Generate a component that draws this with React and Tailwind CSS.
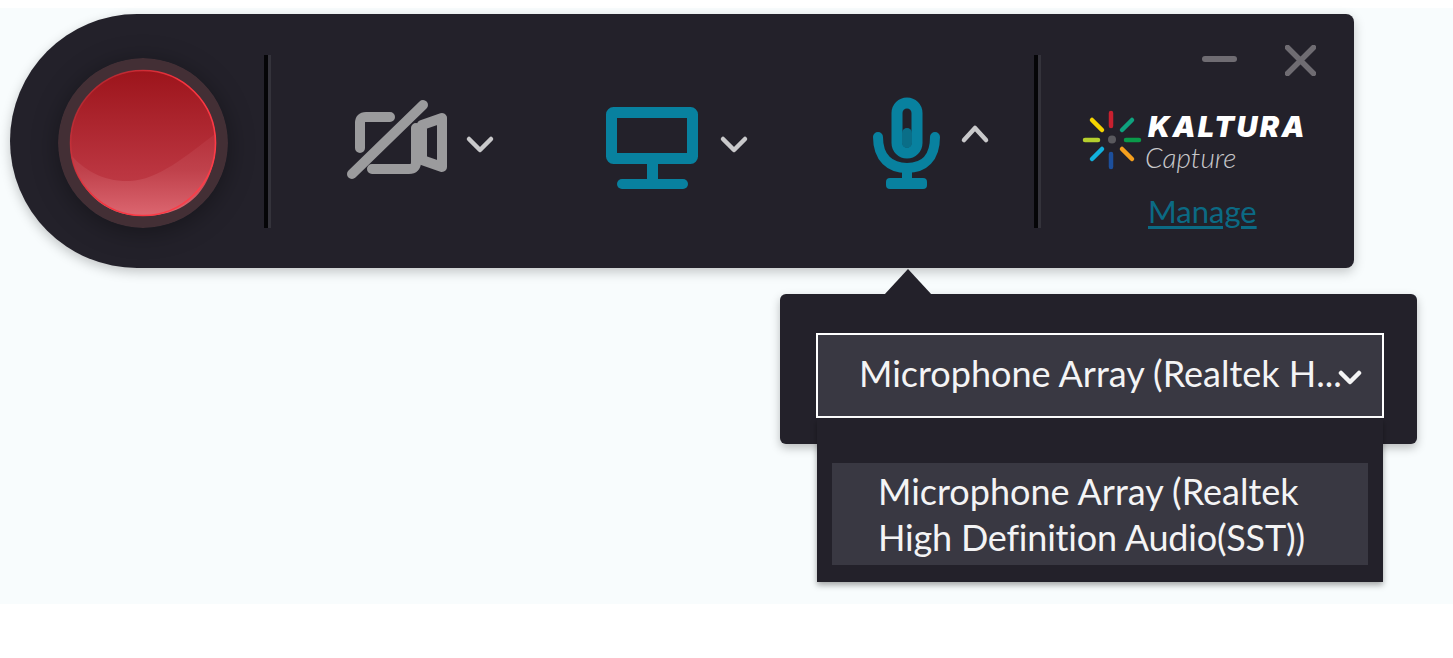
import { useId } from 'react';

const BLUE = '#08819f';

function RecordButton() {
  const id = useId();
  return (
    <svg width="170" height="170" viewBox="0 0 170 170" className="mt-1 shrink-0 rounded-full shadow-[0_4px_26px_rgba(0,0,0,0.35)]">
      <defs>
        <linearGradient id={`${id}top`} x1="0" y1="0" x2="0" y2="1">
          <stop offset="0" stopColor="#9c141b" />
          <stop offset="0.7" stopColor="#bb3540" />
          <stop offset="1" stopColor="#c4434d" />
        </linearGradient>
        <linearGradient id={`${id}low`} x1="0" y1="0" x2="0" y2="1">
          <stop offset="0" stopColor="#b5313b" />
          <stop offset="0.45" stopColor="#c0424c" />
          <stop offset="1" stopColor="#dc6670" />
        </linearGradient>
        <linearGradient id={`${id}edge`} x1="0" y1="0.2" x2="1" y2="0.8">
          <stop offset="0" stopColor="#c23039" stopOpacity="0.5" />
          <stop offset="0.5" stopColor="#f5343f" />
          <stop offset="1" stopColor="#ff3d49" />
        </linearGradient>
      </defs>
      <circle cx="85" cy="85" r="85" fill="#432f35" />
      <circle cx="85" cy="85" r="73" fill={`url(#${id}top)`} />
      <path d="M14 98C26 112 46 124 72 123C100 122 128 98 157 76C160 110 146 158 85 158C44 158 20 130 14 98Z" fill={`url(#${id}low)`} />
      <circle cx="85" cy="85" r="72.5" fill="none" stroke={`url(#${id}edge)`} strokeWidth="1.6" />
    </svg>
  );
}

function Divider() {
  return (
    <div className="flex h-[173px] w-[7px] shrink-0">
      <div className="w-1 bg-[#050507]" />
      <div className="w-[3px] bg-[#34333b]" />
    </div>
  );
}

function Chevron({ x, up, className }) {
  const d = up ? `M${x + 4} 140L${x + 15} 128L${x + 26} 140` : `M${x + 4} 139L${x + 15} 150L${x + 26} 139`;
  return (
    <svg width="30" height="100" viewBox={`${x} 91 30 100`} className={className}>
      <path d={d} fill="none" stroke="#c9c9cb" strokeWidth="4.5" strokeLinecap="round" strokeLinejoin="round" />
    </svg>
  );
}

function CameraOff({ className }) {
  return (
    <svg width="104" height="100" viewBox="346 91 104 100" className={className}>
      <g fill="none" stroke="#9b9b9d" strokeWidth="10" strokeLinecap="round" strokeLinejoin="round">
        <path d="M390 117H366Q360 117 360 123V148" />
        <path d="M372 169H409Q416 169 416 162V128" />
        <path d="M422 125L442 118V167L422 160Z" />
        <path d="M352 174L423 105" />
      </g>
    </svg>
  );
}

function Monitor({ className }) {
  return (
    <svg width="98" height="100" viewBox="603 91 98 100" className={className}>
      <rect x="611.5" y="112.5" width="81" height="46" rx="2" fill="none" stroke={BLUE} strokeWidth="11" />
      <rect x="647" y="160" width="11" height="22" fill={BLUE} />
      <rect x="617" y="179" width="71" height="10" rx="5" fill={BLUE} />
    </svg>
  );
}

function Mic({ className }) {
  return (
    <svg width="73" height="100" viewBox="870 91 73 100" className={className}>
      <rect x="897" y="103" width="20" height="50" rx="10" fill="none" stroke={BLUE} strokeWidth="11" />
      <rect x="902" y="128" width="10" height="20" rx="5" fill="#0a6e88" />
      <path d="M878 137C878 158 890 168 907 168C924 168 935 158 935 137" fill="none" stroke={BLUE} strokeWidth="10" strokeLinecap="round" />
      <rect x="902" y="166" width="10" height="16" fill={BLUE} />
      <rect x="886" y="178" width="41" height="11" rx="4" fill={BLUE} />
    </svg>
  );
}

function LogoRays() {
  const rays = [
    ['#c8202f', 1111, 113, 1111, 126],
    ['#0fa37f', 1122, 130, 1132, 120],
    ['#0a9a4a', 1126, 140, 1139, 140],
    ['#f5a01e', 1122, 149, 1132, 159],
    ['#1c4f9c', 1111, 154, 1111, 167],
    ['#12b0dc', 1102, 149, 1092, 159],
    ['#b5cf2e', 1085, 140, 1098, 140],
    ['#f5d400', 1102, 130, 1092, 120],
  ];
  return (
    <svg width="64" height="64" viewBox="1080 107 64 64" className="shrink-0">
      {rays.map(([color, x1, y1, x2, y2]) => (
        <line key={color} x1={x1} y1={y1} x2={x2} y2={y2} stroke={color} strokeWidth="4.5" strokeLinecap="round" />
      ))}
      <circle cx="1112" cy="139.5" r="4" fill="#5a595e" />
    </svg>
  );
}

export default function App() {
  return (
    <div className="h-[658px] w-[1453px] overflow-hidden bg-white pt-2 font-['Lato',sans-serif]">
      <div className="h-[596px] bg-[#f8fcfd] pl-[10px] pt-[6px]">
        <div className="flex h-[254px] w-[1344px] items-center rounded-l-[127px] rounded-r-lg bg-[#23212a] pl-[48px] shadow-[0_4px_12px_rgba(0,0,0,0.22)]">
          <RecordButton />
          <div className="ml-9"><Divider /></div>
          <CameraOff className="ml-[75px] shrink-0" />
          <Chevron x={465} className="ml-[15px] shrink-0" />
          <Monitor className="ml-[108px] shrink-0" />
          <Chevron x={719} className="ml-[18px] shrink-0" />
          <Mic className="ml-[121px] shrink-0" />
          <Chevron x={960} up className="ml-[17px] shrink-0" />
          <div className="ml-11"><Divider /></div>

          <div className="h-full flex-1">
            <div className="mt-[31px] flex h-[31px] items-center justify-end gap-12 pr-[38px]">
              <div className="mb-[3px] h-[6px] w-[35px] rounded-sm bg-[#6f6c72]" />
              <svg width="31" height="31" viewBox="0 0 31 31">
                <path d="M2.5 2.5L28.5 28.5M28.5 2.5L2.5 28.5" stroke="#6f6c72" strokeWidth="5.5" strokeLinecap="round" />
              </svg>
            </div>
            <div className="ml-[39px] mt-[31px] flex h-16 items-start">
              <LogoRays />
              <div className="ml-[4px] mt-[7px]">
                <div className="font-['Inter',sans-serif] text-[29px] font-black italic leading-[26px] tracking-[2.4px] text-white">KALTURA</div>
                <div className="ml-[-3px] mt-[1px] text-[28px] font-light italic leading-[32px] text-[#c8c8ca]">Capture</div>
              </div>
            </div>
            <div className="ml-[107px] mt-[22px] text-[31px] leading-[36px] text-[#0b6a84] underline underline-offset-[3px]">Manage</div>
          </div>
        </div>

        <div className="relative ml-[770px] mt-[26px] h-[150px] w-[637px] rounded-md bg-[#23212a] pl-9 pt-[39px] shadow-[0_4px_10px_rgba(0,0,0,0.25)]">
          <div className="absolute left-[104px] top-[-25px] h-[26px] w-12 bg-[#23212a] [clip-path:polygon(50%_0,100%_100%,0_100%)]" />
          <div className="flex h-[85px] w-[568px] items-center border-2 border-white bg-[#393842] pl-[41px] text-[36px] text-[#f4f4f5]">
            <span className="mb-[5px] w-[479px] whitespace-nowrap">Microphone Array (Realtek H...</span>
            <svg width="24" height="16" viewBox="0 0 24 16" className="mt-1 shrink-0">
              <path d="M3 3L12 12L21 3" fill="none" stroke="#f4f4f5" strokeWidth="4.5" strokeLinecap="round" strokeLinejoin="round" />
            </svg>
          </div>
          <div className="absolute left-[37px] top-[125px] h-[163px] w-[566px] bg-[#23212a] px-[15px] pt-[44px] shadow-[0_3px_6px_rgba(0,0,0,0.35)]">
            <div className="h-[102px] bg-[#393842] pl-[46px] pt-[5px] text-[36px] leading-[46px] text-[#f4f4f5]">
              Microphone Array (Realtek<br /><span className="tracking-[-0.2px]">High Definition Audio(SST))</span>
            </div>
          </div>
        </div>
      </div>
    </div>
  );
}
